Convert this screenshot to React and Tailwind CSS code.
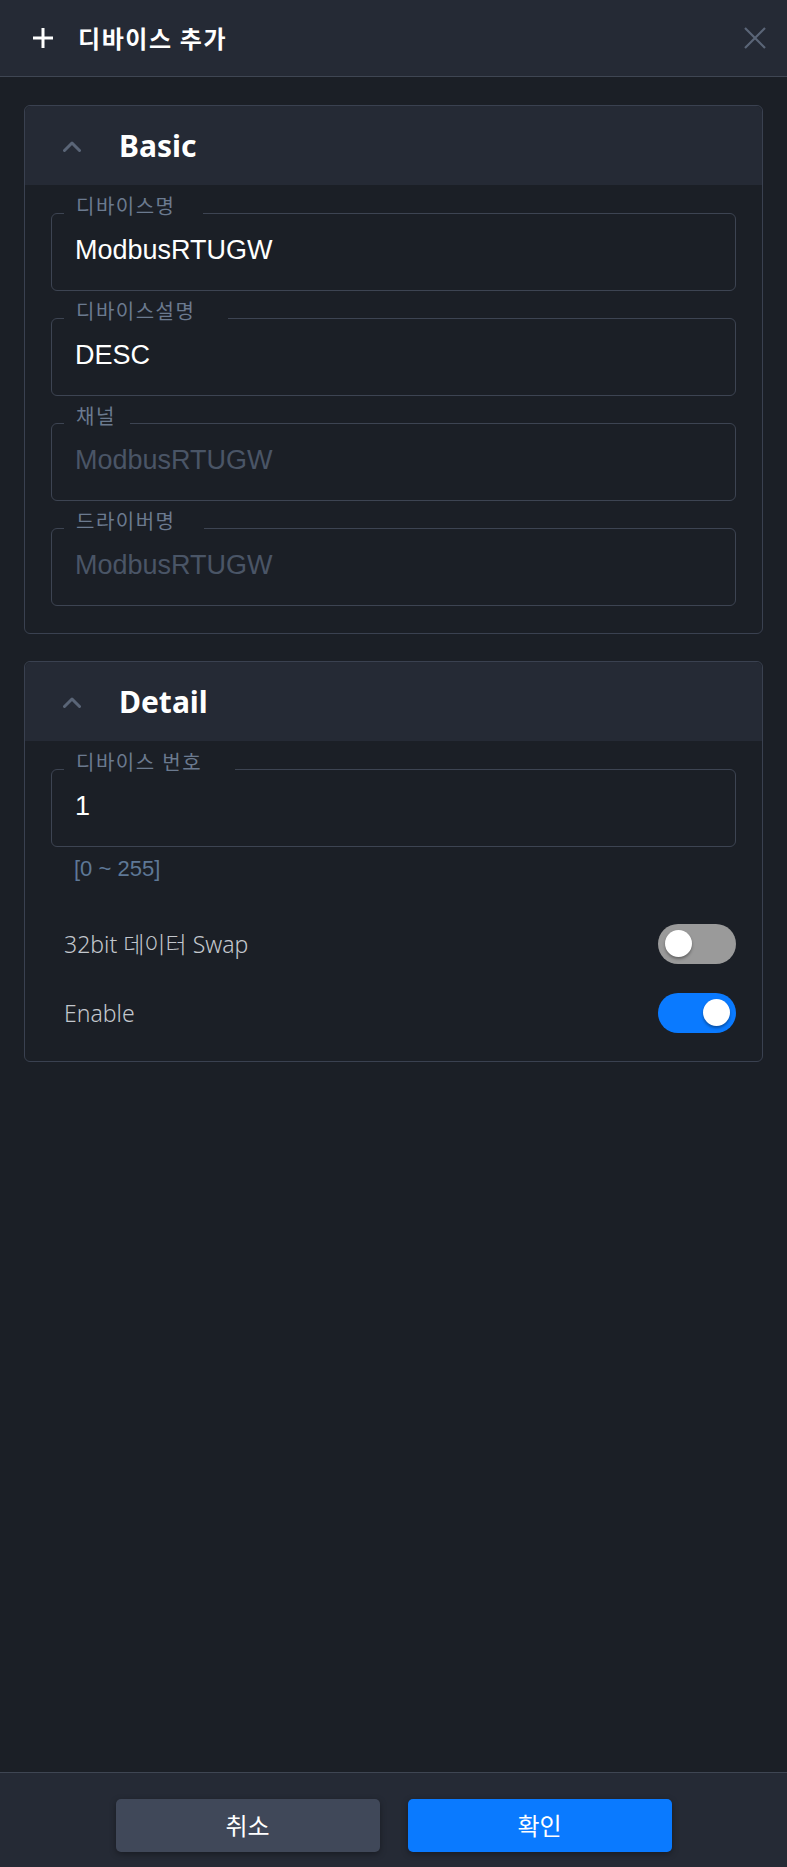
import React from "react";

const BG = "bg-[#1b1f26]";

function ChevronUp() {
  return (
    <svg width="18" height="12" viewBox="0 0 18 12" fill="none" className="shrink-0">
      <path d="M1.5 10.5L9 3l7.5 7.5" stroke="#5a6577" strokeWidth="3" strokeLinecap="round" strokeLinejoin="round" />
    </svg>
  );
}

function Field({ label, value, disabled, gap }) {
  return (
    <div className="relative h-[78px] rounded-[6px] border border-[#3d4452]">
      <span
        className={`absolute -top-[19px] left-[12px] ${BG} pl-[12px] text-[20px] leading-[24px] tracking-[1.5px] text-[#6b7a8f] ${gap}`}
      >
        {label}
      </span>
      <div
        className={`flex h-full items-center pb-[4px] pl-[23px] text-[27px] leading-none ${
          disabled ? "text-[#4a5566]" : "text-white"
        }`}
        style={{ fontFamily: '"Liberation Sans", Arial, sans-serif' }}
      >
        {value}
      </div>
    </div>
  );
}

function Toggle({ on }) {
  return (
    <div
      className={`relative h-10 w-[78px] shrink-0 rounded-full ${on ? "bg-[#0a7aff]" : "bg-[#9a9a9a]"}`}
    >
      <span
        className={`absolute top-[6px] h-[27px] w-[27px] rounded-full bg-white shadow-[0_2px_3px_rgba(0,0,0,0.35)] ${
          on ? "right-[6px]" : "left-[7px]"
        }`}
      />
    </div>
  );
}

function Section({ title, children }) {
  return (
    <section className="rounded-[6px] border border-[#3a4150]">
      <div className="flex h-[79px] items-center gap-[38px] rounded-t-[6px] bg-[#252a35] pl-[38px]">
        <ChevronUp />
        <h2 className="text-[30px] font-bold leading-none text-white">{title}</h2>
      </div>
      {children}
    </section>
  );
}

export default function App() {
  return (
    <div
      className={`flex min-h-screen flex-col ${BG} text-white`}
      style={{ fontFamily: '"Noto Sans", "Noto Sans CJK KR", sans-serif' }}
    >
      <header className="flex h-[77px] shrink-0 items-center justify-between border-b border-[#3f4653] bg-[#252a35] pl-[32px] pr-[20px]">
        <div className="flex items-center gap-[24px]">
          <svg width="22" height="22" viewBox="0 0 22 22" fill="none">
            <path d="M11 1v20M1 11h20" stroke="white" strokeWidth="3" />
          </svg>
          <h1
            className="text-[24px] font-bold leading-none tracking-[1.6px]"
            style={{ fontFamily: '"Noto Sans CJK KR", sans-serif' }}
          >
            디바이스 추가
          </h1>
        </div>
        <svg width="24" height="24" viewBox="0 0 24 24" fill="none">
          <path d="M2 2l20 20M22 2L2 22" stroke="#5a6577" strokeWidth="2.2" />
        </svg>
      </header>

      <main className="flex flex-1 flex-col gap-[27px] px-6 pt-[28px]">
        <Section title="Basic">
          <div className="flex flex-col gap-[27px] px-[26px] pb-[27px] pt-[28px]">
            <Field label="디바이스명" value="ModbusRTUGW" gap="w-[139px]" />
            <Field label="디바이스설명" value="DESC" gap="w-[164px]" />
            <Field label="채널" value="ModbusRTUGW" gap="w-[66px]" disabled />
            <Field label="드라이버명" value="ModbusRTUGW" gap="w-[140px]" disabled />
          </div>
        </Section>

        <Section title="Detail">
          <div className="flex flex-col px-[26px] pb-[28px] pt-[28px]">
            <Field label="디바이스 번호" value="1" gap="w-[171px]" />
            <p
              className="mt-[11px] pl-[23px] text-[22px] leading-none text-[#5e7896]"
              style={{ fontFamily: '"Liberation Sans", Arial, sans-serif' }}
            >
              [0 ~ 255]
            </p>
            <div className="mt-[44px] flex flex-col gap-[29px]">
              <div className="flex h-10 items-center justify-between pl-[13px]">
                <span className="text-[23px] font-light text-[#c3c7cd]">32bit 데이터 Swap</span>
                <Toggle on={false} />
              </div>
              <div className="flex h-10 items-center justify-between pl-[13px]">
                <span className="text-[23px] font-light text-[#c3c7cd]">Enable</span>
                <Toggle on />
              </div>
            </div>
          </div>
        </Section>
      </main>

      <footer className="flex shrink-0 justify-center gap-[28px] border-t border-[#3f4653] bg-[#252a35] pb-[15px] pt-[26px]">
        <button className="h-[53px] w-[264px] rounded-[5px] bg-[#404859] text-[24px] font-normal text-white shadow-[0_2px_6px_rgba(0,0,0,0.35)]">
          취소
        </button>
        <button className="h-[53px] w-[264px] rounded-[5px] bg-[#0a7aff] text-[24px] font-normal text-white shadow-[0_2px_6px_rgba(0,0,0,0.35)]">
          확인
        </button>
      </footer>
    </div>
  );
}
